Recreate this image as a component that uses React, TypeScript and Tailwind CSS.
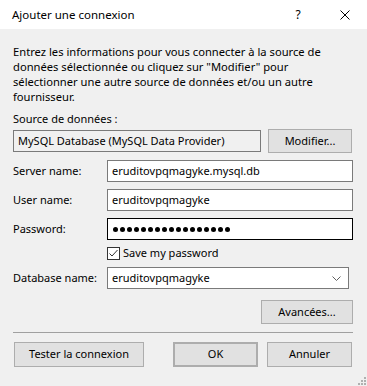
import React from 'react';

const font = { fontFamily: '"Noto Sans", "Open Sans", sans-serif' };

const Field = ({ label, children, focused }: { label: string; children: React.ReactNode; focused?: boolean }) => (
  <div className="flex items-center h-[22px] mt-[7px]">
    <span className="w-[94px]">{label}</span>
    <div
      className={`w-[246px] h-[22px] bg-white border flex items-center px-[4px] ${
        focused ? 'border-black' : 'border-[#7a7a7a]'
      }`}
    >
      {children}
    </div>
  </div>
);

const Button = ({ children, className = '' }: { children: React.ReactNode; className?: string }) => (
  <div
    className={`h-[24px] bg-[#e1e1e1] border border-[#adadad] flex items-center justify-center ${className}`}
  >
    {children}
  </div>
);

const App = () => {
  return (
    <div className="w-[367px] h-[386px] bg-[#f0f0f0] text-[11px] text-black overflow-hidden relative" style={font}>
      {/* title bar */}
      <div className="h-[29px] bg-white flex items-center pl-[12px] text-[11.5px]">
        <span className="flex-1">Ajouter une connexion</span>
        <span className="w-[10px] text-center mr-[37px] text-[12px]">?</span>
        <svg width="10" height="10" viewBox="0 0 10 10" className="mr-[17px]">
          <path d="M0.5 0.5 L9.5 9.5 M9.5 0.5 L0.5 9.5" stroke="#000" strokeWidth="1" />
        </svg>
      </div>

      <div className="pl-[13px] pr-[14px]">
        <p className="mt-[15px] leading-[15px] text-[11.2px]">
          Entrez les informations pour vous connecter à la source de données sélectionnée ou cliquez sur "Modifier"
          pour sélectionner une autre source de données et/ou un autre fournisseur.
        </p>

        <div className="mt-[7px] leading-[15px]">Source de données :</div>
        <div className="flex items-center mt-[3px] h-[24px]">
          <div className="w-[248px] h-[22px] border border-[#7a7a7a] bg-[#f0f0f0] flex items-center px-[4px]">
            MySQL Database (MySQL Data Provider)
          </div>
          <Button className="ml-[7px] w-[84px]">Modifier...</Button>
        </div>

        <div className="mt-[5px]" />
        <Field label="Server name:">eruditovpqmagyke.mysql.db</Field>
        <Field label="User name:">eruditovpqmagyke</Field>
        <Field label="Password:" focused>
          <div className="flex gap-[2px] pl-[1px]">
            {Array.from({ length: 17 }).map((_, i) => (
              <span key={i} className="w-[5px] h-[5px] rounded-full bg-black" />
            ))}
          </div>
        </Field>

        <div className="flex items-center h-[13px] mt-[7px] pl-[94px]">
          <div className="w-[13px] h-[13px] border border-[#333] bg-white flex items-center justify-center">
            <svg width="11" height="11" viewBox="0 0 11 11">
              <path d="M1.5 5.5 L4 8 L9.5 2" stroke="#333" strokeWidth="1" fill="none" />
            </svg>
          </div>
          <span className="ml-[3px]">Save my password</span>
        </div>

        <div className="flex items-center h-[22px] mt-[7px]">
          <span className="w-[94px]">Database name:</span>
          <div className="w-[242px] h-[22px] bg-white border border-[#7a7a7a] flex items-center px-[4px]">
            <span className="flex-1">eruditovpqmagyke</span>
            <svg width="9" height="5" viewBox="0 0 9 5" className="mr-[3px]">
              <path d="M0.5 0.5 L4.5 4.5 L8.5 0.5" stroke="#606060" strokeWidth="1" fill="none" />
            </svg>
          </div>
        </div>

        <div className="flex justify-end mt-[11px]">
          <Button className="w-[92px]">Avancées...</Button>
        </div>

        <div className="h-px bg-[#a0a0a0] mt-[8px]" />

        <div className="flex items-center mt-[9px]">
          <Button className="ml-[1px] w-[130px] h-[25px]">Tester la connexion</Button>
          <Button className="ml-[29px] w-[85px] h-[25px] border-2 border-[#0078d7]">OK</Button>
          <Button className="ml-[9px] w-[85px] h-[25px]">Annuler</Button>
        </div>
      </div>

      {/* resize grip */}
      <svg width="8" height="8" viewBox="0 0 8 8" className="absolute right-[1px] bottom-[1px]">
        <rect x="6" y="0" width="2" height="2" fill="#b0b0b0" />
        <rect x="3" y="3" width="2" height="2" fill="#b0b0b0" />
        <rect x="6" y="3" width="2" height="2" fill="#b0b0b0" />
        <rect x="0" y="6" width="2" height="2" fill="#b0b0b0" />
        <rect x="3" y="6" width="2" height="2" fill="#b0b0b0" />
        <rect x="6" y="6" width="2" height="2" fill="#b0b0b0" />
      </svg>
    </div>
  );
};

export default App;
